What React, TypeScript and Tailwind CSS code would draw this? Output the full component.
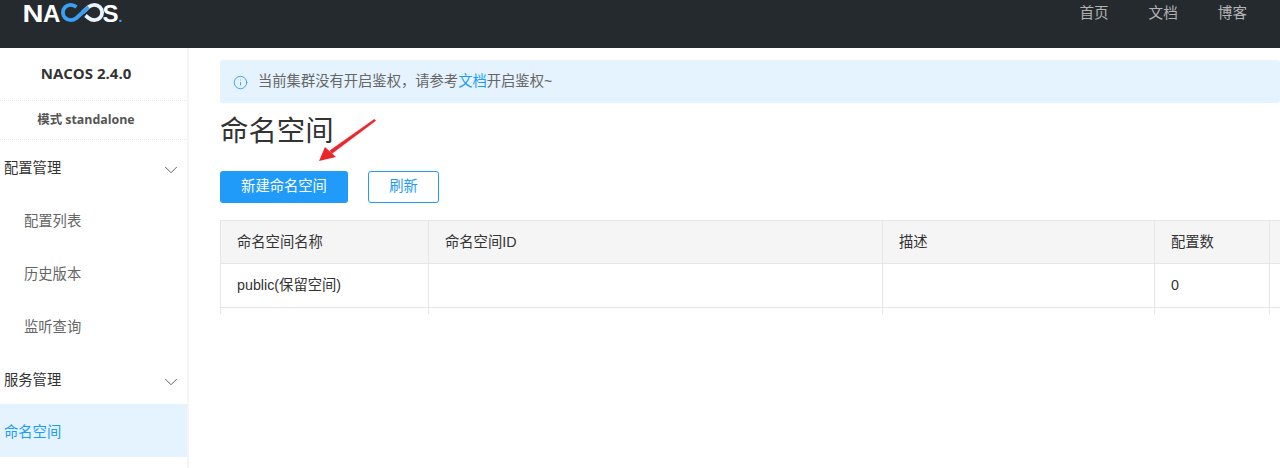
import { ChevronDown, Info } from "lucide-react";

const bodyFont = "font-['Liberation_Sans','Noto_Sans_CJK_SC',sans-serif]";
const titleFont = "font-['Open_Sans','Noto_Sans_CJK_SC',sans-serif]";

function Logo() {
  return (
    <svg width="104" height="26" viewBox="0 0 104 26" fill="none" className="shrink-0 font-['Liberation_Sans',sans-serif] font-bold">
      <text x="0.500" y="22" fontSize="24" fill="#fff" textLength="21" lengthAdjust="spacingAndGlyphs">N</text>
      <text x="21" y="22" fontSize="24" fill="#fff">A</text>
      <path d="M60.500 12.500 66.500 7C68.500 5.400 70.400 4.800 72.400 4.800c4.300 0 7.700 3.400 7.700 7.700s-3.400 7.700-7.700 7.700c-2 0-3.900-.6-5.900-2.200l-3-2.500" stroke="#eaf3fb" strokeWidth="3.800" />
      <path d="M54.500 7C52.500 5.400 50.600 4.800 48.600 4.800c-4.300 0-7.700 3.400-7.700 7.700s3.400 7.700 7.700 7.700c2 0 3.900-.6 5.900-2.200L66.500 7" stroke="#3aa0f5" strokeWidth="3.800" />
      <text x="80.500" y="22" fontSize="24" fill="#fff">S</text>
      <text x="96.500" y="22" fontSize="14" fill="#3aa0f5">.</text>
    </svg>
  );
}

function MenuGroup({ label, className }: { label: string; className: string }) {
  return (
    <div className={`${className} flex items-center justify-between pl-1 pr-[5px] text-[14.3px] text-[#333]`}>
      <span>{label}</span>
      <ChevronDown size={22} strokeWidth={1} className="text-[#555] mt-[2px]" />
    </div>
  );
}

function MenuItem({ label }: { label: string }) {
  return <div className="h-[53px] flex items-center pl-6 text-[14.3px] text-[#666]">{label}</div>;
}

const cols = ["w-[208px]", "w-[454px]", "w-[272px]", "w-[115px]", "w-[80px]"];
const head = ["命名空间名称", "命名空间ID", "描述", "配置数", ""];
const row = ["public(保留空间)", "", "", "0", ""];

function Row({ cells, header }: { cells: string[]; header?: boolean }) {
  return (
    <div className={`flex shrink-0 border-b border-[#e6e6e6] ${header ? "h-[43px] bg-[#f5f5f5]" : "h-[44px] bg-white"}`}>
      {cells.map((c, i) => (
        <div key={i} className={`${cols[i]} shrink-0 border-r border-[#e6e6e6] flex items-center pl-4 text-[14.3px] text-[#333] ${header ? "pt-px" : ""}`}>
          {c}
        </div>
      ))}
    </div>
  );
}

export default function App() {
  return (
    <div className={`relative h-[468px] w-[1280px] overflow-hidden bg-white ${bodyFont}`}>
      <header className="h-12 bg-[#252a2f] flex justify-between pl-[22px] pr-[33px]">
        <Logo />
        <nav className="flex gap-[40px] text-[14.6px] text-[#b3b3b3] pt-[5px] leading-4">
          <span>首页</span>
          <span>文档</span>
          <span>博客</span>
        </nav>
      </header>

      <div className="flex h-[420px]">
        <aside className="w-[189px] shrink-0 border-r-2 border-[#f5f5f5] overflow-hidden">
          <div className={`h-[53px] flex items-center justify-center pr-[15px] pb-px border-b border-dotted border-[#e6e6e6] text-[15px] font-bold text-[#333] ${titleFont}`}>
            NACOS 2.4.0
          </div>
          <div className={`h-[39px] flex items-center justify-center pr-[15px] pt-px border-b border-dotted border-[#e6e6e6] text-[12.4px] font-bold text-[#555] ${titleFont}`}>
            模式 standalone
          </div>
          <div className="h-[2px]" />
          <MenuGroup label="配置管理" className="h-[53px]" />
          <MenuItem label="配置列表" />
          <MenuItem label="历史版本" />
          <MenuItem label="监听查询" />
          <MenuGroup label="服务管理" className="h-[50px] pt-[3px]" />
          <div className="h-[53px] flex items-center pl-1 pt-[5px] text-[14.3px] text-[#209bfa] bg-[#e4f3fe]">命名空间</div>
        </aside>

        <main className="flex-1 min-w-0 pl-[31px] pt-3 overflow-hidden">
          <div className="h-[43px] flex items-center gap-[10px] pl-[13px] bg-[#e4f3fe] rounded-[3px] text-[14.3px] text-[#666]">
            <Info size={15} strokeWidth={1.5} className="text-[#3aa0f5] mt-px" />
            <span>
              当前集群没有开启鉴权，请参考<span className="text-[#209bfa]">文档</span>开启鉴权~
            </span>
          </div>
          <h1 className="mt-[10px] text-[28.4px] leading-9 font-normal text-[#333]">命名空间</h1>
          <div className="mt-[22px] flex gap-5">
            <button className="w-[128px] h-8 rounded-[3px] bg-[#209bfa] text-[14.3px] text-white">新建命名空间</button>
            <button className="w-[71px] h-8 rounded-[3px] border border-[#209bfa] bg-white text-[14.3px] text-[#209bfa]">刷新</button>
          </div>
          <div className="mt-[17px] h-[94px] w-[1100px] overflow-hidden border-t border-l border-[#e6e6e6]">
            <Row cells={head} header />
            <Row cells={row} />
            <Row cells={["", "", "", "", ""]} />
          </div>
        </main>
      </div>

      {/* red annotation arrow */}
      <svg className="absolute left-[316px] top-[115px]" width="64" height="50" viewBox="0 0 64 50" fill="none">
        <path d="M58.400 4.200 14 35.600 16 38.400 59.600 5.800z" fill="#e8262c" stroke="#e8262c" strokeWidth=".5" strokeLinejoin="round" />
        <path d="M3 46 9 32l11 10z" fill="#e8262c" />
      </svg>
    </div>
  );
}
